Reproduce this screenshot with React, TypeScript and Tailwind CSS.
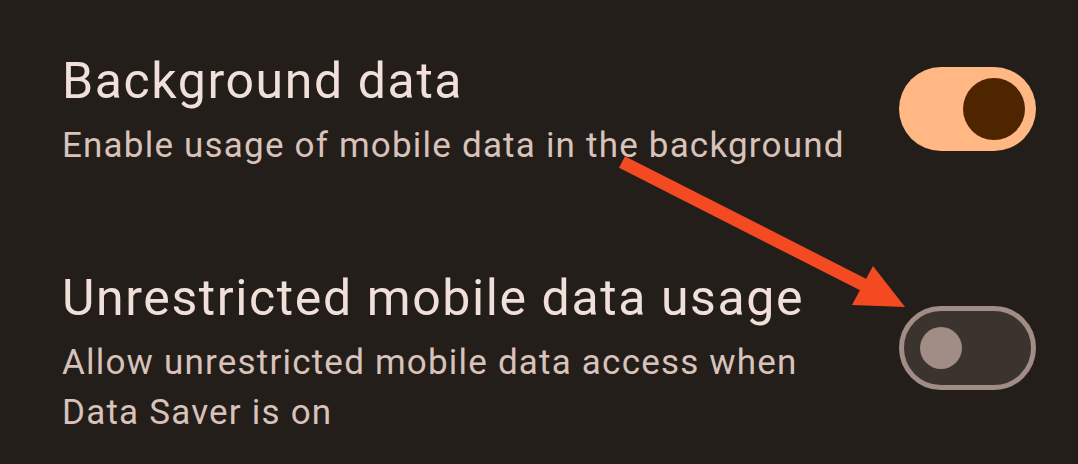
import React from "react";

function Toggle({ on, className }: { on: boolean; className?: string }) {
  if (on) {
    return (
      <div
        className={`flex h-[84px] w-[137px] shrink-0 items-center justify-end rounded-full bg-[#ffb784] pr-[11px] ${className ?? ""}`}
      >
        <div className="h-[62px] w-[62px] rounded-full bg-[#4f2500]" />
      </div>
    );
  }
  return (
    <div
      className={`flex h-[84px] w-[137px] shrink-0 items-center rounded-full border-[5px] border-[#a08d85] bg-[#3a332e] pl-[16px] ${className ?? ""}`}
    >
      <div className="h-[42px] w-[42px] rounded-full bg-[#a08d85]" />
    </div>
  );
}

function SettingRow({
  title,
  summary,
  on,
  toggleClass,
}: {
  title: string;
  summary: React.ReactNode;
  on: boolean;
  toggleClass: string;
}) {
  return (
    <div className="flex items-start justify-between gap-8">
      <div className="flex flex-col">
        <div className="text-[50px] leading-[56px] tracking-[1.6px] text-[#f0e0d9]">{title}</div>
        <div className="mt-[12px] text-[35px] leading-[50px] tracking-[1.2px] text-[#d8c2ba]">
          {summary}
        </div>
      </div>
      <Toggle on={on} className={toggleClass} />
    </div>
  );
}

export default function App() {
  return (
    <div
      className="relative h-[464px] w-[1078px] overflow-hidden bg-[#231e1a] pl-[62px] pr-[42px] pt-[53px]"
      style={{ fontFamily: "Roboto, 'Noto Sans', sans-serif" }}
    >
      <div className="flex flex-col gap-[99px]">
        <SettingRow
          title="Background data"
          summary="Enable usage of mobile data in the background"
          on
          toggleClass="mt-[14px]"
        />
        <SettingRow
          title="Unrestricted mobile data usage"
          summary={
            <>
              Allow unrestricted mobile data access when
              <br />
              Data Saver is on
            </>
          }
          on={false}
          toggleClass="mt-[36px]"
        />
      </div>

      {/* annotation arrow */}
      <svg
        className="pointer-events-none absolute left-0 top-0"
        width="1078"
        height="464"
        viewBox="0 0 1078 464"
      >
        <line x1="622" y1="162" x2="866" y2="286" stroke="#f44a22" strokeWidth="13" />
        <polygon points="873,266 905,307 852,305" fill="#f44a22" />
      </svg>
    </div>
  );
}
